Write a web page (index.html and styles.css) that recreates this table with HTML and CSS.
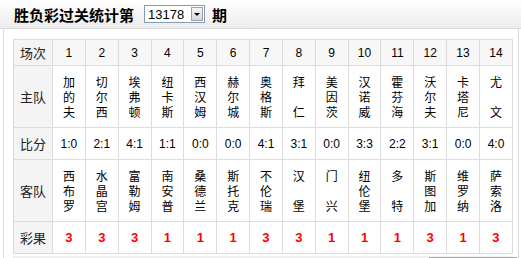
FILE: index.html
```html
<!DOCTYPE html>
<html>
<head>
<meta charset="utf-8">
<link rel="stylesheet" href="styles.css">
</head>
<body>
<div class="head">
  <h1 class="title">胜负彩过关统计第</h1>
  <div class="sel"><span class="sel-val">13178</span><span class="sel-btn"><span class="tri"></span></span></div>
  <span class="qi">期</span>
</div>
<div class="box">
  <table class="grid">
    <colgroup><col class="c-lab"><col span="14"></colgroup>
    <tr class="r-head">
      <th class="lab">场次</th><td>1</td><td>2</td><td>3</td><td>4</td><td>5</td><td>6</td><td>7</td><td>8</td><td>9</td><td>10</td><td>11</td><td>12</td><td>13</td><td>14</td>
    </tr>
    <tr class="r-team">
      <th class="lab">主队</th>
      <td>加<br>的<br>夫</td><td>切<br>尔<br>西</td><td>埃<br>弗<br>顿</td><td>纽<br>卡<br>斯</td><td>西<br>汉<br>姆</td><td>赫<br>尔<br>城</td><td>奥<br>格<br>斯</td><td>拜<br>　<br>仁</td><td>美<br>因<br>茨</td><td>汉<br>诺<br>威</td><td>霍<br>芬<br>海</td><td>沃<br>尔<br>夫</td><td>卡<br>塔<br>尼</td><td>尤<br>　<br>文</td>
    </tr>
    <tr class="r-score">
      <th class="lab">比分</th>
      <td>1:0</td><td>2:1</td><td>4:1</td><td>1:1</td><td>0:0</td><td>0:0</td><td>4:1</td><td>3:1</td><td>0:0</td><td>3:3</td><td>2:2</td><td>3:1</td><td>0:0</td><td>4:0</td>
    </tr>
    <tr class="r-team">
      <th class="lab">客队</th>
      <td>西<br>布<br>罗</td><td>水<br>晶<br>宫</td><td>富<br>勒<br>姆</td><td>南<br>安<br>普</td><td>桑<br>德<br>兰</td><td>斯<br>托<br>克</td><td>不<br>伦<br>瑞</td><td>汉<br>　<br>堡</td><td>门<br>　<br>兴</td><td>纽<br>伦<br>堡</td><td>多<br>　<br>特</td><td>斯<br>图<br>加</td><td>维<br>罗<br>纳</td><td>萨<br>索<br>洛</td>
    </tr>
    <tr class="r-res">
      <th class="lab">彩果</th>
      <td>3</td><td>3</td><td>3</td><td>1</td><td>1</td><td>1</td><td>3</td><td>3</td><td>1</td><td>1</td><td>1</td><td>3</td><td>1</td><td>3</td>
    </tr>
  </table>
  <div class="foot"><span class="bar"></span></div>
</div>
</body>
</html>
```

FILE: styles.css
```css
html, body {
  margin: 0;
  padding: 0;
  background: #fff;
  font-family: "Liberation Sans", Arial, "Noto Sans CJK SC", sans-serif;
}
.head {
  height: 28px;
  border-bottom: 1px solid #d9d9d9;
  background: linear-gradient(#ffffff, #ececec);
  display: flex;
  align-items: center;
  padding-left: 14px;
}
.title {
  margin: 0;
  font-size: 15px;
  font-weight: bold;
  font-family: "Noto Sans CJK SC", sans-serif;
  color: #000;
  letter-spacing: 0;
}
.sel {
  margin-left: 10px;
  width: 59px;
  height: 16px;
  border: 1px solid #7f9db9;
  background: #fff;
  display: flex;
  align-items: center;
}
.sel-val {
  flex: 1;
  font-size: 13px;
  padding-left: 3px;
  color: #000;
}
.sel-btn {
  width: 12px;
  height: 14px;
  margin-right: 1px;
  background: linear-gradient(#f4f4f4, #d8d8d8);
  border: 1px solid #a0a0a0;
  box-sizing: border-box;
  display: flex;
  align-items: center;
  justify-content: center;
}
.tri {
  width: 0;
  height: 0;
  border-left: 3px solid transparent;
  border-right: 3px solid transparent;
  border-top: 3px solid #000;
}
.qi {
  margin-left: 7px;
  font-size: 15px;
  font-weight: bold;
  font-family: "Noto Sans CJK SC", sans-serif;
}
.box {
  margin: 0 2px 0 3px;
  border-left: 1px solid #dcdcdc;
  border-right: 1px solid #dcdcdc;
  padding: 10px 5px 0 9px;
}
.grid {
  border-collapse: collapse;
  table-layout: fixed;
  width: 500px;
}
.c-lab { width: 39px; }
.grid th, .grid td {
  border: 1px solid #dcdcdc;
  padding: 0;
  text-align: center;
  vertical-align: middle;
}
.grid td {
  font-size: 12px;
  color: #000;
}
.lab {
  background: #f4f4f4;
  font-weight: normal;
  font-size: 13px;
  font-family: "Noto Sans CJK SC", sans-serif;
  color: #222;
}
.r-head td { background: #f7f7f7; }
.r-head { height: 26px; }
.r-team { height: 62px; }
.r-team td {
  font-family: "Noto Sans CJK SC", sans-serif;
  font-size: 12px;
  line-height: 15px;
}
.r-score { height: 32px; }
.r-res { height: 32px; }
.r-res td {
  color: #ff0000;
  font-weight: bold;
  font-size: 13px;
}
.foot {
  height: 3px;
  margin-top: 2px;
  background: #efefef;
  position: relative;
}
.bar {
  position: absolute;
  left: 416px;
  top: 1px;
  width: 88px;
  height: 2px;
  background: #a8a8a8;
}
```
